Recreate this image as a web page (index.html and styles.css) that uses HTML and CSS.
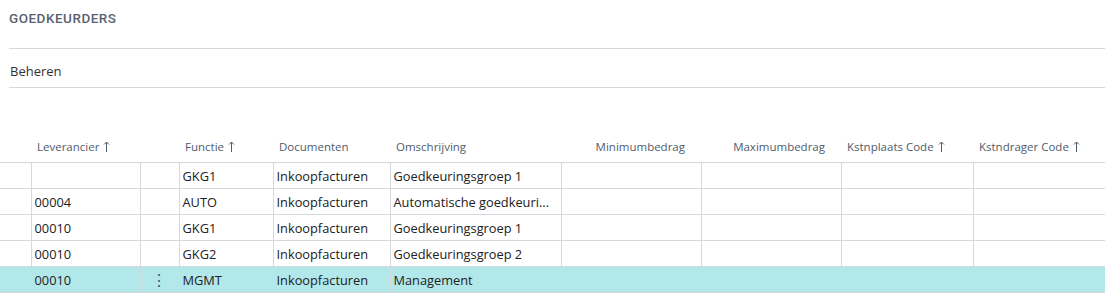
FILE: index.html
```html
<!DOCTYPE html>
<html lang="nl">
<head>
    <meta charset="UTF-8">
    <title>Goedkeurders</title>
    <link rel="stylesheet" href="styles.css">
</head>
<body>
    <!-- Kop van de pagina -->
    <div class="titel">GOEDKEURDERS</div>
    <div class="acties">Beheren</div>

    <!-- Lijst -->
    <table class="lijst">
        <colgroup>
            <col style="width:31px"><col style="width:109px"><col style="width:39px"><col style="width:94px"><col style="width:117px">
            <col style="width:171px"><col style="width:140px"><col style="width:140px"><col style="width:132px"><col style="width:132px">
        </colgroup>
        <thead>
            <tr>
                <th></th>
                <th>Leverancier <svg class="pijl" width="7" height="11" viewBox="0 0 7 11"><path d="M3.5 1v10M1 3.5l2.5-2.5 2.5 2.5" fill="none" stroke="currentColor" stroke-width="1"/></svg></th>
                <th></th>
                <th>Functie <svg class="pijl" width="7" height="11" viewBox="0 0 7 11"><path d="M3.5 1v10M1 3.5l2.5-2.5 2.5 2.5" fill="none" stroke="currentColor" stroke-width="1"/></svg></th>
                <th>Documenten</th>
                <th>Omschrijving</th>
                <th class="rechts">Minimumbedrag</th>
                <th class="rechts">Maximumbedrag</th>
                <th>Kstnplaats Code <svg class="pijl" width="7" height="11" viewBox="0 0 7 11"><path d="M3.5 1v10M1 3.5l2.5-2.5 2.5 2.5" fill="none" stroke="currentColor" stroke-width="1"/></svg></th>
                <th>Kstndrager Code <svg class="pijl" width="7" height="11" viewBox="0 0 7 11"><path d="M3.5 1v10M1 3.5l2.5-2.5 2.5 2.5" fill="none" stroke="currentColor" stroke-width="1"/></svg></th>
            </tr>
        </thead>
        <tbody>
            <tr>
                <td></td><td></td><td></td><td>GKG1</td><td>Inkoopfacturen</td><td>Goedkeuringsgroep 1</td><td></td><td></td><td></td><td></td>
            </tr>
            <tr>
                <td></td><td>00004</td><td></td><td>AUTO</td><td>Inkoopfacturen</td><td>Automatische goedkeuri...</td><td></td><td></td><td></td><td></td>
            </tr>
            <tr>
                <td></td><td>00010</td><td></td><td>GKG1</td><td>Inkoopfacturen</td><td>Goedkeuringsgroep 1</td><td></td><td></td><td></td><td></td>
            </tr>
            <tr>
                <td></td><td>00010</td><td></td><td>GKG2</td><td>Inkoopfacturen</td><td>Goedkeuringsgroep 2</td><td></td><td></td><td></td><td></td>
            </tr>
            <tr class="actief">
                <td></td><td>00010</td><td class="menu">&#8942;</td><td>MGMT</td><td>Inkoopfacturen</td><td>Management</td><td></td><td></td><td></td><td></td>
            </tr>
        </tbody>
    </table>
</body>
</html>
```

FILE: styles.css
```css
/* Algemeen */
body {
    margin: 0;
    font-family: 'Open Sans', Arial, sans-serif;
    font-size: 12px;
    color: #212121;
    background: #fff;
}

/* Titel en actiebalk */
.titel {
    font-family: Roboto, Arial, sans-serif;
    font-weight: 500;
    font-size: 13.5px;
    letter-spacing: 0.5px;
    color: #5a6270;
    margin-left: 9px;
    padding-top: 10px;
    height: 38px;
    border-bottom: 1px solid #d5d8dc;
}
.acties {
    margin-left: 9px;
    padding: 13px 0 0 1px;
    height: 25px;
    font-size: 13px;
    color: #333;
    border-bottom: 1px solid #d5d8dc;
}

/* Tabel */
.lijst {
    margin-top: 42px;
    width: 1105px;
    table-layout: fixed;
    border-collapse: collapse;
}
.lijst th {
    height: 32px;
    padding: 0 6px;
    text-align: left;
    font-weight: normal;
    font-size: 11.5px;
    color: #505c6d;
    white-space: nowrap;
    border-bottom: 1px solid #d5d8dc;
}
.lijst th.rechts {
    text-align: right;
    padding-right: 16px;
}
.pijl {
    vertical-align: -1px;
    margin-left: 1px;
}
.lijst td {
    height: 25px;
    padding: 0 3px;
    font-size: 12.8px;
    white-space: nowrap;
    overflow: hidden;
    border-bottom: 1px solid #d5d8dc;
    border-left: 1px solid #d5d8dc;
}
.lijst td:first-child {
    border-left: none;
}
.lijst tr.actief td {
    background: #b3e8eb;
}
.lijst td.menu {
    text-align: center;
    color: #2e5f8e;
    font-size: 16px;
    padding-left: 2px;
}
```
